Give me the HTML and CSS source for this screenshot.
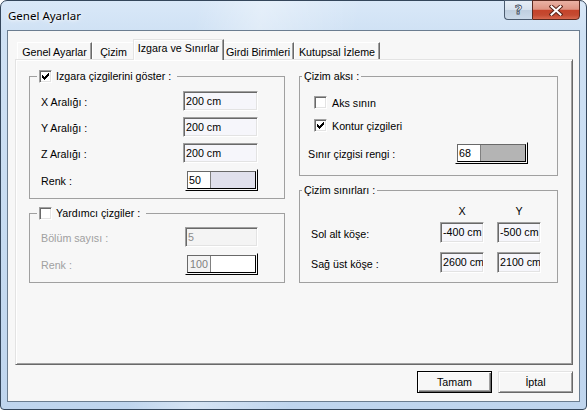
FILE: index.html
```html
<!DOCTYPE html>
<html lang="tr">
<head>
<meta charset="utf-8">
<title>Genel Ayarlar</title>
<link rel="stylesheet" href="styles.css">
</head>
<body>
<div class="window">
  <div class="titlebar">
    <span class="title">Genel Ayarlar</span>
    <div class="caption-buttons">
      <span class="cap help">?</span>
      <span class="cap close">
        <svg width="14" height="11" viewBox="0 0 14 11">
          <path d="M2.5 1.5 L11.5 9.5 M11.5 1.5 L2.5 9.5" stroke="#5a2418" stroke-width="4" stroke-linecap="square" fill="none"/>
          <path d="M2.5 1.5 L11.5 9.5 M11.5 1.5 L2.5 9.5" stroke="#ffffff" stroke-width="2" stroke-linecap="square" fill="none"/>
        </svg>
      </span>
    </div>
  </div>

  <div class="client">
    <div class="tabs">
      <span class="tab t1">Genel Ayarlar</span>
      <span class="tab t2">Çizim</span>
      <span class="tab t3 active">Izgara ve Sınırlar</span>
      <span class="tab t4">Girdi Birimleri</span>
      <span class="tab t5">Kutupsal İzleme</span>
    </div>

    <div class="panel">
      <div class="col col-left">
        <fieldset class="group g-grid">
          <legend class="legend-check"><span class="lg"><span class="check"><svg width="11" height="11" viewBox="0 0 11 11"><path d="M2 4h1v3h-1z M3 5h1v3h-1z M4 6h1v3h-1z M5 5h1v3h-1z M6 4h1v3h-1z M7 3h1v3h-1z M8 2h1v3h-1z" fill="#000"/></svg></span>Izgara çizgilerini göster :</span></legend>
          <div class="form form-grid">
            <span class="lbl">X Aralığı :</span><span class="edit">200 cm</span>
            <span class="lbl">Y Aralığı :</span><span class="edit">200 cm</span>
            <span class="lbl">Z Aralığı :</span><span class="edit">200 cm</span>
            <span class="lbl">Renk :</span>
            <span class="colorbtn"><span class="cb-inner"><span class="num">50</span><span class="swatch sw-lavender"></span></span></span>
          </div>
        </fieldset>

        <fieldset class="group g-aux">
          <legend class="legend-check"><span class="lg"><span class="check"></span>Yardımcı çizgiler :</span></legend>
          <div class="form form-aux">
            <span class="lbl disabled">Bölüm sayısı :</span><span class="edit edit-disabled">5</span>
            <span class="lbl disabled">Renk :</span>
            <span class="colorbtn"><span class="cb-inner"><span class="num num-disabled">100</span><span class="swatch sw-white"></span></span></span>
          </div>
        </fieldset>
      </div>

      <div class="col col-right">
        <fieldset class="group g-axis">
          <legend class="legend-text">Çizim aksı :</legend>
          <div class="form form-axis">
            <label class="check-row"><span class="check"></span>Aks sının</label>
            <label class="check-row"><span class="check"><svg width="11" height="11" viewBox="0 0 11 11"><path d="M2 4h1v3h-1z M3 5h1v3h-1z M4 6h1v3h-1z M5 5h1v3h-1z M6 4h1v3h-1z M7 3h1v3h-1z M8 2h1v3h-1z" fill="#000"/></svg></span>Kontur çizgileri</label>
            <div class="color-row">
              <span class="lbl">Sınır çizgisi rengi :</span>
              <span class="colorbtn"><span class="cb-inner"><span class="num">68</span><span class="swatch sw-gray"></span></span></span>
            </div>
          </div>
        </fieldset>

        <fieldset class="group g-limits">
          <legend class="legend-text">Çizim sınırları :</legend>
          <div class="form form-limits">
            <span></span><span class="head">X</span><span class="head">Y</span>
            <span class="lbl row1">Sol alt köşe:</span><span class="edit edit-sm row1">-400 cm</span><span class="edit edit-sm row1">-500 cm</span>
            <span class="lbl row2">Sağ üst köşe :</span><span class="edit edit-sm row2">2600 cm</span><span class="edit edit-sm row2">2100 cm</span>
          </div>
        </fieldset>
      </div>
    </div>

    <div class="buttons">
      <span class="btn btn-default">Tamam</span>
      <span class="btn">İptal</span>
    </div>
  </div>
</div>
</body>
</html>
```

FILE: styles.css
```css
html, body {
  margin: 0;
  padding: 0;
}

body {
  width: 587px;
  height: 410px;
  overflow: hidden;
  background: #ffffff;
  font-family: "Liberation Sans", Arial, sans-serif;
  font-size: 10.7px;
  color: #000;
}

/* Window frame */
.window {
  box-sizing: border-box;
  width: 587px;
  height: 410px;
  border: 1px solid #34465b;
  border-radius: 7px 7px 4px 4px;
  background:
    linear-gradient(100deg, rgba(255,255,255,0) 30%, rgba(255,255,255,0.35) 40%, rgba(255,255,255,0) 55%),
    linear-gradient(180deg, #d9e8f8 0%, #cfe1f4 8%, #c6dbf1 60%, #bfd5ee 100%);
  padding: 0 6px 7px 6px;
  display: flex;
  flex-direction: column;
}

.titlebar {
  height: 29px;
  flex: none;
  display: flex;
  align-items: flex-start;
  justify-content: space-between;
}

.title {
  padding: 6px 0 0 1px;
  font-family: "Noto Sans", "Liberation Sans", sans-serif;
  font-size: 11.5px;
  line-height: 17px;
  color: #000;
  text-shadow: 0 0 6px #fff, 0 0 3px #fff;
}

.caption-buttons {
  display: flex;
  margin-top: -1px;
}

.cap {
  box-sizing: border-box;
  height: 20px;
  display: flex;
  align-items: center;
  justify-content: center;
  border: 1px solid #4b5c70;
}

.help {
  width: 28px;
  border-right: none;
  border-radius: 0 0 0 4px;
  background: linear-gradient(180deg, #e6eef7 0%, #d7e2ee 48%, #bfcfe0 52%, #cbdaea 100%);
  font-family: "DejaVu Sans", sans-serif;
  font-weight: bold;
  font-size: 13px;
  color: #ffffff;
  -webkit-text-stroke: 0.8px #3b4a5c;
  padding-bottom: 1px;
}

.close {
  width: 48px;
  border-color: #5b2a20;
  border-radius: 0 0 4px 0;
  background: linear-gradient(180deg, #eab2a4 0%, #de9483 46%, #c5432a 52%, #c44a31 78%, #d8694f 100%);
}

.close svg {
  display: block;
}

/* Client area */
.client {
  flex: 1;
  border: 1px solid #6b7d90;
  background: #f7f7f7;
  display: flex;
  flex-direction: column;
}

/* Tab strip */
.tabs {
  height: 28px;
  flex: none;
  display: flex;
  align-items: flex-end;
  padding-left: 9px;
}

.tab {
  box-sizing: border-box;
  height: 17px;
  display: flex;
  align-items: center;
  justify-content: center;
  border-top: 1px solid #ffffff;
  border-left: 1px solid #ffffff;
  border-right: 1px solid #696969;
  box-shadow: inset -1px 0 0 #a0a0a0;
  white-space: nowrap;
  padding-top: 1px;
}

.t1 { width: 75px; }
.t2 { width: 43px; }
.t3 { width: 87px; }
.t4 { width: 72px; }
.t5 { width: 86px; }

.tab.active {
  width: 91px;
  height: 21px;
  margin: 0 -2px -1px -2px;
  position: relative;
  z-index: 1;
  background: #f7f7f7;
  border-top-color: #e3e3e3;
  border-left-color: #e3e3e3;
  box-shadow: inset -1px 0 0 #a0a0a0, inset 1px 1px 0 #ffffff;
  padding: 0 0 4px 0;
}

/* Tab page */
.panel {
  box-sizing: border-box;
  width: 558px;
  height: 306px;
  flex: none;
  margin-left: 7px;
  border: 1px solid;
  border-color: #e3e3e3 #696969 #696969 #e3e3e3;
  box-shadow: inset 1px 1px 0 #ffffff, inset -1px -1px 0 #a0a0a0;
  padding: 9px 14px 0 13px;
  display: flex;
  gap: 14px;
}

.col {
  display: flex;
  flex-direction: column;
  gap: 7px;
}

.col-left { width: 256px; }
.col-right { width: 259px; }

/* Group boxes */
.group {
  box-sizing: border-box;
  margin: 0;
  padding: 0;
  min-width: 0;
  border: 1px solid #a0a0a0;
}

.group legend {
  height: 14px;
  line-height: 14px;
  padding: 0 2px;
}

.legend-check {
  margin-left: 7px;
}

.legend-check .lg {
  display: flex;
  align-items: center;
  gap: 4px;
  padding-right: 4px;
}

.legend-text {
  margin-left: 2px;
}

/* Check box */
.check {
  box-sizing: border-box;
  width: 13px;
  height: 13px;
  flex: none;
  border: 1px solid;
  border-color: #a0a0a0 #ffffff #ffffff #a0a0a0;
  box-shadow: inset 1px 1px 0 #696969, inset -1px -1px 0 #e3e3e3;
  background: #ffffff;
}

.check svg {
  display: block;
}

/* Label / field rows */
.lbl {
  white-space: nowrap;
  align-self: center;
  padding-top: 2px;
}

.disabled {
  color: #a0a0a0;
}

.edit {
  box-sizing: border-box;
  height: 20px;
  line-height: 18px;
  padding-left: 2px;
  border: 1px solid;
  border-color: #a0a0a0 #ffffff #ffffff #a0a0a0;
  box-shadow: inset 1px 1px 0 #696969, inset -1px -1px 0 #e3e3e3;
  background: #f6f6fb;
  white-space: nowrap;
  overflow: hidden;
}

.edit-disabled {
  color: #8c8c8c;
  background: #f4f4f4;
}

.colorbtn {
  box-sizing: border-box;
  width: 73px;
  height: 22px;
  border: 1px solid;
  border-color: #f7f7f7 #000000 #000000 #f7f7f7;
  padding: 1px;
  display: flex;
}

.cb-inner {
  flex: 1;
  display: flex;
  border: 1px solid;
  border-color: #696969 #000000 #000000 #696969;
}

.num {
  width: 21px;
  flex: none;
  background: #ffffff;
  border-right: 1px solid #808080;
  padding-left: 1px;
  line-height: 16px;
}

.num-disabled {
  width: 20px;
  color: #808080;
  background: #f4f4f4;
  padding-left: 2px;
}

.swatch { flex: 1; }
.sw-lavender { background: #e0e0ec; }
.sw-gray { background: #b4b4b4; }
.sw-white { background: #ffffff; }

/* Grid spacing */
.form-grid {
  display: grid;
  grid-template-columns: 142px 75px;
  row-gap: 6px;
  padding: 8px 0 7px 11px;
}

.form-grid .colorbtn {
  margin-left: 2px;
}

.form-aux {
  display: grid;
  grid-template-columns: 144px 73px;
  row-gap: 6px;
  padding: 7px 0 7px 11px;
}

.form-aux .edit {
  width: 73px;
}

.form-axis {
  display: flex;
  flex-direction: column;
  padding: 13px 0 11px 0;
}

.check-row {
  display: flex;
  align-items: center;
  gap: 5px;
  height: 13px;
  padding-left: 14px;
  margin-bottom: 10px;
  white-space: nowrap;
}

.color-row {
  display: flex;
  padding-left: 8px;
}

.color-row .lbl {
  width: 147px;
  padding-top: 1px;
}

.form-limits {
  display: grid;
  grid-template-columns: 116px 44px 44px;
  grid-template-rows: 13px 25px 30px;
  column-gap: 13px;
  padding: 8px 0 9px 11px;
}

.head {
  text-align: center;
  line-height: 13px;
}

.form-limits .edit {
  height: 21px;
  line-height: 19px;
}

.form-limits .row1 {
  margin-top: 4px;
}

.form-limits .row2 {
  margin-top: 9px;
}

.form-limits .lbl.row1,
.form-limits .lbl.row2 {
  align-self: start;
  line-height: 21px;
  padding-top: 2px;
}

/* Dialog buttons */
.buttons {
  display: flex;
  justify-content: flex-end;
  gap: 6px;
  padding: 6px 6px 0 0;
}

.btn {
  box-sizing: border-box;
  width: 75px;
  height: 22px;
  display: flex;
  align-items: center;
  justify-content: center;
  border: 1px solid;
  border-color: #e3e3e3 #696969 #696969 #e3e3e3;
  box-shadow: inset 1px 1px 0 #ffffff, inset -1px -1px 0 #a0a0a0;
  background: #f7f7f7;
}

.btn-default {
  border-color: #000000;
  box-shadow: inset 1px 1px 0 #ffffff, inset -1px -1px 0 #696969, inset -2px -2px 0 #a0a0a0;
}
```
